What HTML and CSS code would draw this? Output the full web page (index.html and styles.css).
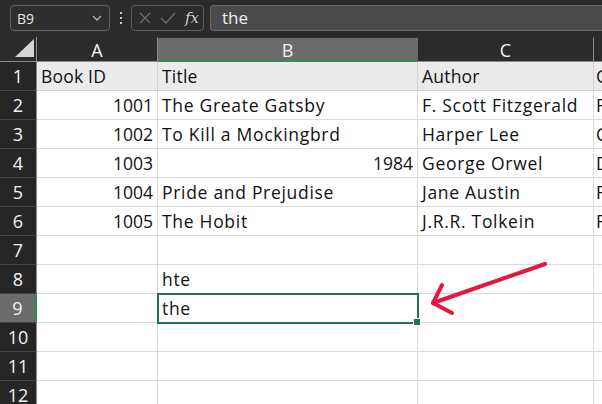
FILE: index.html
```html
<!DOCTYPE html>
<html>
<head>
<meta charset="utf-8">
<link rel="stylesheet" href="styles.css">
</head>
<body>
<div class="app">
  <div class="toolbar">
    <div class="namebox">
      <span class="name">B9</span>
      <svg class="chev" width="10" height="6" viewBox="0 0 10 6"><path d="M1 1 L5 5 L9 1" fill="none" stroke="#b5b5b5" stroke-width="1.3"/></svg>
    </div>
    <div class="dots"><i></i><i></i><i></i></div>
    <div class="fxbox">
      <svg width="14" height="14" viewBox="0 0 14 14"><path d="M2 2 L12 12 M12 2 L2 12" stroke="#6c6c6c" stroke-width="1.3"/></svg>
      <svg width="16" height="14" viewBox="0 0 16 14"><path d="M1 7 L6 12 L15 2" fill="none" stroke="#6c6c6c" stroke-width="1.3"/></svg>
      <span class="fx">fx</span>
    </div>
    <div class="formula">the</div>
  </div>
  <div class="sheet">
    <div class="corner"><svg width="19" height="18" viewBox="0 0 19 18"><path d="M19 0 L19 18 L0 18 Z" fill="#d6d6d6"/></svg></div>
    <div class="colh">A</div>
    <div class="colh sel">B</div>
    <div class="colh">C</div>
    <div class="colh last"></div>

    <div class="rowh">1</div>
    <div class="cell hd">Book ID</div>
    <div class="cell hd">Title</div>
    <div class="cell hd">Author</div>
    <div class="cell hd clip">G</div>

    <div class="rowh">2</div>
    <div class="cell num">1001</div>
    <div class="cell">The Greate Gatsby</div>
    <div class="cell">F. Scott Fitzgerald</div>
    <div class="cell clip">F</div>

    <div class="rowh">3</div>
    <div class="cell num">1002</div>
    <div class="cell">To Kill a Mockingbrd</div>
    <div class="cell">Harper Lee</div>
    <div class="cell clip">C</div>

    <div class="rowh">4</div>
    <div class="cell num">1003</div>
    <div class="cell num">1984</div>
    <div class="cell">George Orwel</div>
    <div class="cell clip">D</div>

    <div class="rowh">5</div>
    <div class="cell num">1004</div>
    <div class="cell">Pride and Prejudise</div>
    <div class="cell">Jane Austin</div>
    <div class="cell clip">F</div>

    <div class="rowh">6</div>
    <div class="cell num">1005</div>
    <div class="cell">The Hobit</div>
    <div class="cell">J.R.R. Tolkein</div>
    <div class="cell clip">F</div>

    <div class="rowh">7</div>
    <div class="cell"></div><div class="cell"></div><div class="cell"></div><div class="cell"></div>

    <div class="rowh">8</div>
    <div class="cell"></div>
    <div class="cell">hte</div>
    <div class="cell"></div><div class="cell"></div>

    <div class="rowh sel">9</div>
    <div class="cell"></div>
    <div class="cell active">the</div>
    <div class="cell"></div><div class="cell"></div>

    <div class="rowh">10</div>
    <div class="cell"></div><div class="cell"></div><div class="cell"></div><div class="cell"></div>

    <div class="rowh">11</div>
    <div class="cell"></div><div class="cell"></div><div class="cell"></div><div class="cell"></div>

    <div class="rowh">12</div>
    <div class="cell"></div><div class="cell"></div><div class="cell"></div><div class="cell"></div>
  </div>
  <svg class="arrow" width="602" height="404" viewBox="0 0 602 404">
    <path d="M545 264 L433 303" fill="none" stroke="#e3173f" stroke-width="4" stroke-linecap="round"/>
    <path d="M442 285 L433 303 L452 313" fill="none" stroke="#e3173f" stroke-width="4" stroke-linecap="round" stroke-linejoin="round"/>
  </svg>
</div>
</body>
</html>
```
FILE: styles.css
```css
* { box-sizing: border-box; }
html, body { margin: 0; padding: 0; }
body {
  background: #2b2b2b;
  font-family: "Open Sans", "Noto Sans", sans-serif;
  width: 602px;
  height: 404px;
  overflow: hidden;
}
.app { position: relative; width: 602px; height: 404px; overflow: hidden; }
.toolbar {
  height: 37px;
  display: flex;
  align-items: flex-start;
  padding: 5px 0 0 10px;
  background: #2b2b2b;
}
.namebox {
  width: 100px;
  height: 26px;
  border: 1px solid #626262;
  border-radius: 4px;
  display: flex;
  align-items: center;
  justify-content: space-between;
  padding: 0 7px 0 6px;
  background: #2e2e2e;
}
.name { color: #e6e6e6; font-size: 14px; }
.dots {
  width: 21px;
  height: 26px;
  display: flex;
  flex-direction: column;
  align-items: center;
  justify-content: center;
  gap: 3px;
}
.dots i { display: block; width: 2px; height: 2px; background: #c8c8c8; }
.fxbox {
  width: 73px;
  height: 26px;
  border: 1px solid #5c5c5c;
  border-radius: 4px;
  display: flex;
  align-items: center;
  gap: 8px;
  padding: 0 0 0 6px;
}
.fx {
  color: #cfcfcf;
  font-family: "DejaVu Serif", "Liberation Serif", serif;
  font-style: italic;
  font-size: 15px;
  margin-left: 1px;
}
.formula {
  margin-left: 6px;
  flex: 1;
  height: 26px;
  border: 1px solid #6a6a6a;
  border-right: none;
  border-radius: 4px 0 0 4px;
  background: #4a4a4a;
  color: #f0f0f0;
  font-size: 17px;
  padding: 0 0 0 11px;
  line-height: 23px;
}
.sheet {
  display: grid;
  grid-template-columns: 37px 121px 260px 176px 40px;
  grid-template-rows: 25px repeat(12, 29px);
}
.corner {
  border-right: 1px solid #8a8a8a;
  border-bottom: 1px solid #8a8a8a;
  display: flex;
  align-items: flex-end;
  justify-content: flex-end;
  padding: 0 2px 4px 0;
}
.colh {
  background: #2b2b2b;
  color: #f2f2f2;
  font-size: 18px;
  text-align: center;
  line-height: 24px;
  border-right: 1px solid #8a8a8a;
  border-bottom: 1px solid #8a8a8a;
  border-top: 1px solid #2b2b2b;
}
.colh.sel { background: #6b6b6b; border-bottom: 2px solid #3c8a5c; border-right-color: #6b6b6b; }
.colh.last { border-right: none; }
.rowh {
  background: #262626;
  color: #f2f2f2;
  font-size: 18px;
  text-align: center;
  line-height: 28px;
  border-bottom: 1px solid #444;
  border-right: 1px solid #8a8a8a;
}
.rowh.sel { background: #6b6b6b; border-right: 2px solid #2e8a57; }
.cell {
  background: #fff;
  color: #111;
  font-size: 17.5px;
  letter-spacing: 0.7px;
  line-height: 29px;
  padding: 0 4px;
  border-right: 1px solid #dadada;
  border-bottom: 1px solid #dadada;
  white-space: nowrap;
  overflow: hidden;
}
.cell.hd { background: #ebebeb; border-bottom-color: #d2d2d2; border-right-color: #d2d2d2; letter-spacing: 0.2px; }
.cell.num { text-align: right; letter-spacing: 0; padding-right: 4px; }
.cell.clip { padding-left: 2px; }
.cell.active {
  position: relative;
  overflow: visible;
  outline: 2px solid #22724a;
  outline-offset: -1px;
}
.cell.active::after {
  content: "";
  position: absolute;
  right: -4px;
  bottom: -4px;
  width: 6px;
  height: 6px;
  background: #22724a;
  border: 1px solid #fff;
}
.arrow { position: absolute; left: 0; top: 0; pointer-events: none; }
```
